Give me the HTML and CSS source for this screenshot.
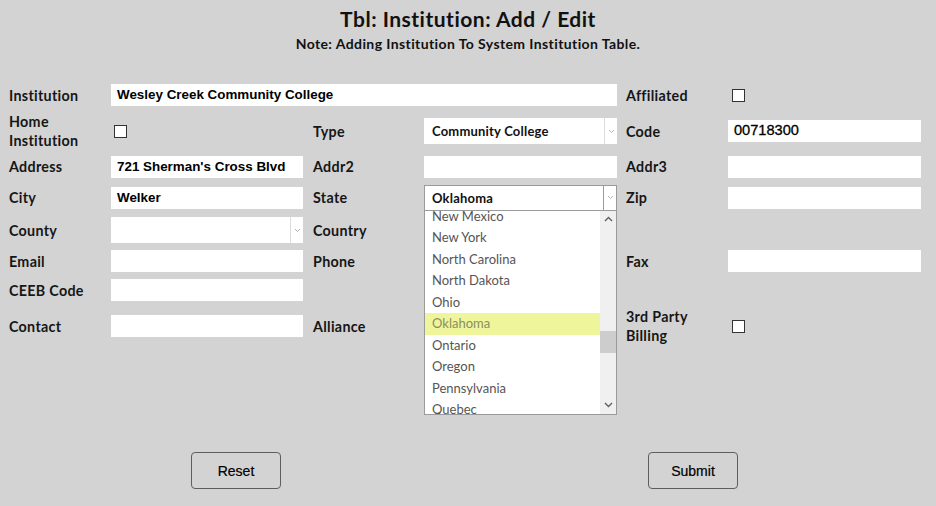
FILE: index.html
```html
<!DOCTYPE html>
<html>
<head>
<meta charset="utf-8">
<link rel="stylesheet" href="styles.css">
</head>
<body>
<div class="page">
  <header class="head">
    <h1 class="title">Tbl: Institution: Add / Edit</h1>
    <p class="note">Note: Adding Institution To System Institution Table.</p>
  </header>

  <div class="form">
    <!-- row 1 -->
    <div class="lbl">Institution</div>
    <div class="cell span3"><div class="inp">Wesley Creek Community College</div></div>
    <div class="lbl c5">Affiliated</div>
    <div class="cell"><span class="chk chk-r"></span></div>

    <!-- row 2 -->
    <div class="lbl two">Home<br>Institution</div>
    <div class="cell"><span class="chk chk-l"></span></div>
    <div class="lbl c3">Type</div>
    <div class="cell"><div class="sel"><span class="sel-val">Community College</span><span class="sel-btn"><svg width="7" height="5" viewBox="0 0 7 5"><polyline points="1,1 3.5,3.5 6,1" fill="none" stroke="#b4b4b4" stroke-width="1"/></svg></span></div></div>
    <div class="lbl c5">Code</div>
    <div class="cell"><div class="inp code">00718300</div></div>

    <!-- row 3 -->
    <div class="lbl">Address</div>
    <div class="cell"><div class="inp">721 Sherman's Cross Blvd</div></div>
    <div class="lbl c3">Addr2</div>
    <div class="cell"><div class="inp"></div></div>
    <div class="lbl c5">Addr3</div>
    <div class="cell"><div class="inp"></div></div>

    <!-- row 4 -->
    <div class="lbl">City</div>
    <div class="cell"><div class="inp">Welker</div></div>
    <div class="lbl c3">State</div>
    <div class="cell state">
      <div class="sel open"><span class="sel-val">Oklahoma</span><span class="sel-btn"><svg width="7" height="5" viewBox="0 0 7 5"><polyline points="1,1 3.5,3.5 6,1" fill="none" stroke="#b4b4b4" stroke-width="1"/></svg></span></div>
      <div class="drop">
        <div class="drop-list">
          <ul class="opts">
            <li>New Mexico</li>
            <li>New York</li>
            <li>North Carolina</li>
            <li>North Dakota</li>
            <li>Ohio</li>
            <li class="hl">Oklahoma</li>
            <li>Ontario</li>
            <li>Oregon</li>
            <li>Pennsylvania</li>
            <li>Quebec</li>
          </ul>
        </div>
        <div class="sbar">
          <span class="sb-arrow"><svg width="9" height="6" viewBox="0 0 9 6"><polyline points="1,5 4.5,1.5 8,5" fill="none" stroke="#606060" stroke-width="1.4"/></svg></span>
          <span class="sb-track"><span class="sb-thumb"></span></span>
          <span class="sb-arrow"><svg width="9" height="6" viewBox="0 0 9 6"><polyline points="1,1 4.5,4.5 8,1" fill="none" stroke="#606060" stroke-width="1.4"/></svg></span>
        </div>
      </div>
    </div>
    <div class="lbl c5">Zip</div>
    <div class="cell"><div class="inp"></div></div>

    <!-- row 5 -->
    <div class="lbl">County</div>
    <div class="cell"><div class="sel"><span class="sel-val"></span><span class="sel-btn"><svg width="7" height="5" viewBox="0 0 7 5"><polyline points="1,1 3.5,3.5 6,1" fill="none" stroke="#b4b4b4" stroke-width="1"/></svg></span></div></div>
    <div class="lbl c3">Country</div>
    <div class="cell"></div>
    <div class="lbl c5"></div>
    <div class="cell"></div>

    <!-- row 6 -->
    <div class="lbl">Email</div>
    <div class="cell"><div class="inp"></div></div>
    <div class="lbl c3">Phone</div>
    <div class="cell"></div>
    <div class="lbl c5">Fax</div>
    <div class="cell"><div class="inp"></div></div>

    <!-- row 7 -->
    <div class="lbl">CEEB Code</div>
    <div class="cell"><div class="inp"></div></div>
    <div class="lbl c3"></div>
    <div class="cell"></div>
    <div class="lbl c5"></div>
    <div class="cell"></div>

    <!-- row 8 -->
    <div class="lbl">Contact</div>
    <div class="cell"><div class="inp"></div></div>
    <div class="lbl c3">Alliance</div>
    <div class="cell"></div>
    <div class="lbl c5 two">3rd Party<br>Billing</div>
    <div class="cell"><span class="chk chk-r"></span></div>
  </div>

  <div class="actions">
    <button class="btn">Reset</button>
    <button class="btn">Submit</button>
  </div>
</div>
</body>
</html>
```

FILE: styles.css
```css
* { box-sizing: border-box; }

html, body {
  margin: 0;
  padding: 0;
  background: #d3d3d3;
}

body {
  width: 936px;
  height: 506px;
  overflow: hidden;
  font-family: Lato, "Open Sans", sans-serif;
  color: #161616;
}

.head {
  padding-top: 7px;
  text-align: center;
}

.title {
  margin: 0;
  font-size: 21px;
  line-height: 24px;
  font-weight: 700;
  letter-spacing: 0.5px;
  color: #111;
}

.note {
  margin: 5px 0 0;
  font-size: 14px;
  line-height: 16px;
  font-weight: 700;
  letter-spacing: 0.4px;
  color: #111;
}

.form {
  margin-top: 25px;
  padding-left: 9px;
  display: grid;
  grid-template-columns: 102px 192px 121px 193px 111px 193px;
  grid-template-rows: 36px 36px 35px 27px 38px 24px 34px 38px;
  align-items: center;
}

.lbl {
  font-size: 14.3px;
  font-weight: 700;
  line-height: 19px;
  letter-spacing: 0.3px;
  color: #161616;
}

.lbl.c3 { padding-left: 10px; }
.lbl.c5 { padding-left: 9px; }

.span3 { grid-column: span 3; }

.cell { position: relative; }

.inp {
  height: 22px;
  background: #fff;
  padding: 0 6px;
  font-family: "Liberation Sans", Arial, sans-serif;
  font-weight: 700;
  font-size: 13.4px;
  line-height: 22px;
  color: #000;
  white-space: nowrap;
  overflow: hidden;
}

.inp.code {
  font-size: 14.6px;
  line-height: 20px;
  font-weight: 400;
  -webkit-text-stroke: 0.3px #000;
}

.chk {
  display: block;
  width: 13px;
  height: 13px;
  background: #fff;
  border: 1px solid #333;
}
.chk-l { margin-left: 3px; }
.chk-r { margin-left: 4px; }

.sel {
  height: 26px;
  background: #fff;
  display: flex;
  align-items: stretch;
}

.sel-val {
  flex: 1;
  padding-left: 8px;
  font-size: 13px;
  font-weight: 700;
  line-height: 26px;
  letter-spacing: 0.2px;
  color: #111;
}

.sel-btn {
  width: 13px;
  border-left: 1px solid #dcdcdc;
  display: flex;
  align-items: center;
  justify-content: center;
}

.sel.open {
  height: 26px;
  border: 1px solid #9a9a9a;
}
.sel.open .sel-val { padding-left: 7px; line-height: 24px; }
.sel.open .sel-btn { border-left-color: #9a9a9a; }

.drop {
  position: absolute;
  left: 0;
  top: 26px;
  width: 193px;
  height: 204px;
  background: #fff;
  border: 1px solid #9a9a9a;
  border-top: 0;
  display: flex;
  z-index: 5;
}

.drop-list {
  flex: 1;
  overflow: hidden;
}

.opts {
  list-style: none;
  margin: -5px 0 0;
  padding: 0;
}

.opts li {
  height: 21.5px;
  line-height: 21.5px;
  padding-left: 7px;
  font-size: 13px;
  color: #555;
}

.opts li.hl {
  background: #eff59b;
  color: #8a8f5e;
}

.sbar {
  width: 16px;
  background: #f0f0f0;
  display: flex;
  flex-direction: column;
}

.sb-arrow {
  height: 17px;
  display: flex;
  align-items: center;
  justify-content: center;
}

.sb-track {
  flex: 1;
  position: relative;
}

.sb-thumb {
  position: absolute;
  left: 0;
  right: 0;
  top: 103px;
  height: 22px;
  background: #cdcdcd;
}

.actions {
  margin-top: 107px;
  padding-left: 191px;
  display: flex;
  gap: 367px;
}

.btn {
  width: 90px;
  height: 37px;
  background: #d3d3d3;
  border: 1px solid #5e5e5e;
  border-radius: 4px;
  font-family: "Liberation Sans", Arial, sans-serif;
  font-size: 14px;
  color: #000;
  padding: 0;
  -webkit-text-stroke: 0.2px #000;
}
```
